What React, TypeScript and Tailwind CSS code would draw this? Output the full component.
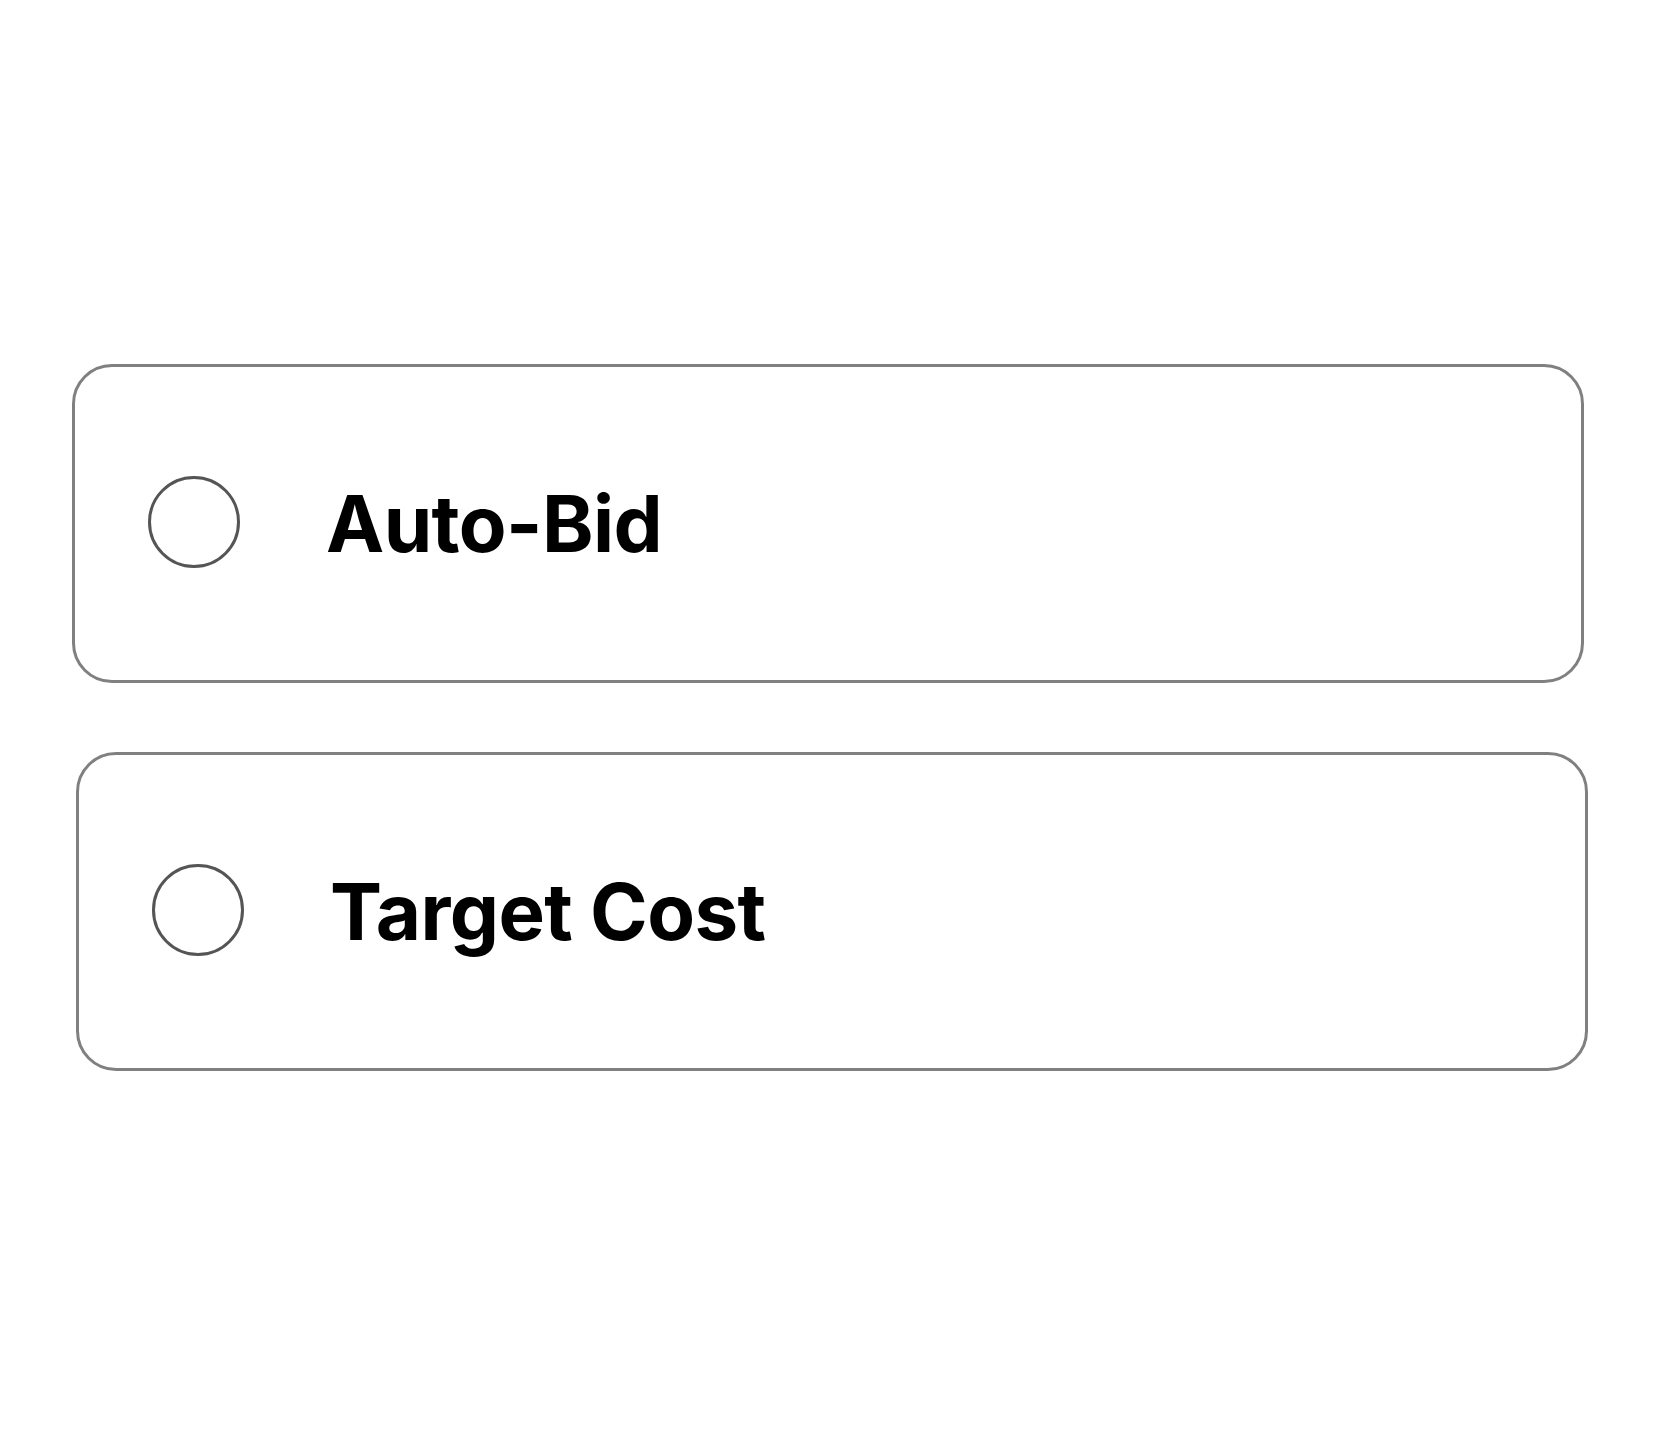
import React from "react";

type Option = { label: string; offset: string };

const options: Option[] = [
  { label: "Auto-Bid", offset: "ml-[72px]" },
  { label: "Target Cost", offset: "ml-[76px]" },
];

function RadioCard({ label, offset }: Option) {
  return (
    <label
      className={`${offset} flex h-[319px] w-[1512px] cursor-pointer items-center rounded-[40px] border-[3px] border-[#808080] bg-white pl-[73px]`}
    >
      <span className="mb-[4px] block h-[92px] w-[92px] shrink-0 rounded-full border-[3px] border-[#555555]" />
      <span
        className="ml-[86px] text-[78px] font-bold leading-none tracking-[-0.6px] text-black"
        style={{ fontFamily: "Inter, 'Liberation Sans', sans-serif" }}
      >
        {label}
      </span>
    </label>
  );
}

export default function App() {
  return (
    <div className="min-h-[1433px] w-[1664px] bg-white pt-[364px]">
      <div className="flex flex-col gap-[69px]">
        {options.map((o) => (
          <RadioCard key={o.label} {...o} />
        ))}
      </div>
    </div>
  );
}
